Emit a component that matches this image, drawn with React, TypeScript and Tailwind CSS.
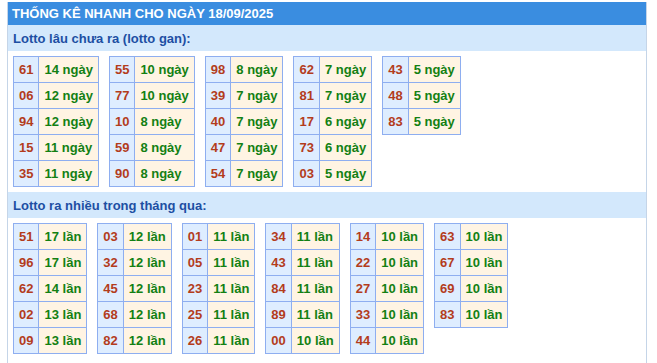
import React from "react";

type Row = [string, string];

const gan: Row[][] = [
  [["61", "14"], ["06", "12"], ["94", "12"], ["15", "11"], ["35", "11"]],
  [["55", "10"], ["77", "10"], ["10", "8"], ["59", "8"], ["90", "8"]],
  [["98", "8"], ["39", "7"], ["40", "7"], ["47", "7"], ["54", "7"]],
  [["62", "7"], ["81", "7"], ["17", "6"], ["73", "6"], ["03", "5"]],
  [["43", "5"], ["48", "5"], ["83", "5"]],
];

const nhieu: Row[][] = [
  [["51", "17"], ["96", "17"], ["62", "14"], ["02", "13"], ["09", "13"]],
  [["03", "12"], ["32", "12"], ["45", "12"], ["68", "12"], ["82", "12"]],
  [["01", "11"], ["05", "11"], ["23", "11"], ["25", "11"], ["26", "11"]],
  [["34", "11"], ["43", "11"], ["84", "11"], ["89", "11"], ["00", "10"]],
  [["14", "10"], ["22", "10"], ["27", "10"], ["33", "10"], ["44", "10"]],
  [["63", "10"], ["67", "10"], ["69", "10"], ["83", "10"]],
];

function Table({ rows, unit }: { rows: Row[]; unit: string }) {
  return (
    <div className="inline-grid grid-cols-[auto_auto] gap-px bg-[#8eaef0] border border-[#8eaef0]">
      {rows.map(([n, c], i) => (
        <React.Fragment key={i}>
          <div className="h-[25px] flex items-center justify-center px-[5px] bg-[#deedff] text-[#b33c1c]">
            {n}
          </div>
          <div className="h-[25px] flex items-center px-[5px] bg-[#fff4e3] text-[#138013]">
            {c} {unit}
          </div>
        </React.Fragment>
      ))}
    </div>
  );
}

function Section({ title, tables, unit }: { title: string; tables: Row[][]; unit: string }) {
  return (
    <>
      <div className="h-[26px] bg-[#d3e8fc] text-[#1d4fa3] flex items-center pl-[5px]">{title}</div>
      <div className="flex items-start gap-x-[10px] pl-[5px] py-[5px]">
        {tables.map((t, i) => (
          <Table key={i} rows={t} unit={unit} />
        ))}
      </div>
    </>
  );
}

export default function App() {
  return (
    <div className="w-[657px] h-[363px] bg-white overflow-hidden pt-[2px]">
      <div
        className="ml-[7px] w-[640px] border-l border-r border-[#c5d5e8] text-[13px] font-bold leading-none pb-[20px]"
        style={{ fontFamily: '"Liberation Sans", Arial, sans-serif' }}
      >
        <div className="h-[23px] bg-[#3a8de0] text-white flex items-center pl-[4px]">
          THỐNG KÊ NHANH CHO NGÀY 18/09/2025
        </div>
        <Section title="Lotto lâu chưa ra (lotto gan):" tables={gan} unit="ngày" />
        <Section title="Lotto ra nhiều trong tháng qua:" tables={nhieu} unit="lần" />
      </div>
    </div>
  );
}
